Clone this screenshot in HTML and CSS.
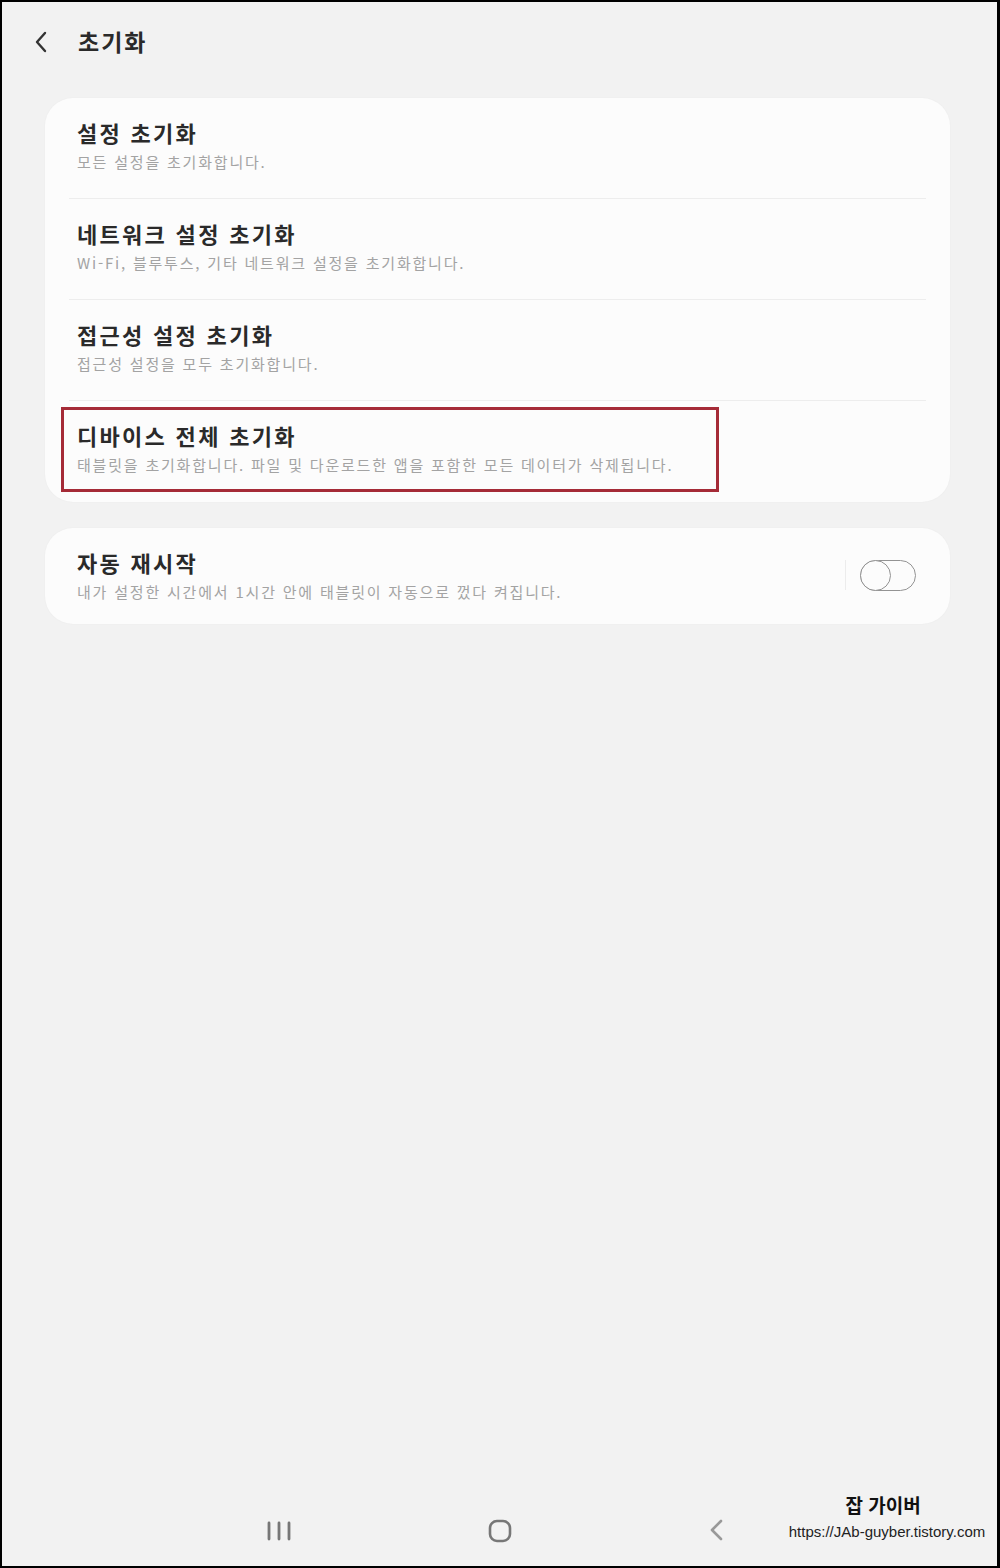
FILE: index.html
```html
<!DOCTYPE html>
<html lang="ko">
<head>
<meta charset="utf-8">
<link rel="stylesheet" href="styles.css">
</head>
<body>
<div class="frame">
  <header class="topbar">
    <svg class="back" width="16" height="24" viewBox="0 0 16 24"><path d="M12 3 L4 12 L12 21" fill="none" stroke="#333" stroke-width="2.4" stroke-linecap="round" stroke-linejoin="round"/></svg>
    <h1 class="title">초기화</h1>
  </header>
  <main class="content">
    <section class="card">
      <div class="row">
        <div class="row-title">설정 초기화</div>
        <div class="row-sub">모든 설정을 초기화합니다.</div>
      </div>
      <div class="row">
        <div class="row-title">네트워크 설정 초기화</div>
        <div class="row-sub">Wi-Fi, 블루투스, 기타 네트워크 설정을 초기화합니다.</div>
      </div>
      <div class="row">
        <div class="row-title">접근성 설정 초기화</div>
        <div class="row-sub">접근성 설정을 모두 초기화합니다.</div>
      </div>
      <div class="row last">
        <div class="highlight"></div>
        <div class="row-title">디바이스 전체 초기화</div>
        <div class="row-sub">태블릿을 초기화합니다. 파일 및 다운로드한 앱을 포함한 모든 데이터가 삭제됩니다.</div>
      </div>
    </section>
    <section class="card card-single">
      <div class="row row-toggle">
        <div class="text">
          <div class="row-title">자동 재시작</div>
          <div class="row-sub">내가 설정한 시간에서 1시간 안에 태블릿이 자동으로 껐다 켜집니다.</div>
        </div>
        <div class="vsep"></div>
        <div class="toggle"><span class="knob"></span></div>
      </div>
    </section>
  </main>
  <footer class="navbar">
    <svg class="nav-recent" width="28" height="20" viewBox="0 0 28 20"><path d="M4 2 V18 M14 2 V18 M24 2 V18" stroke="#777" stroke-width="2.8" stroke-linecap="round"/></svg>
    <svg class="nav-home" width="26" height="26" viewBox="0 0 26 26"><rect x="3" y="3" width="20" height="20" rx="7" fill="none" stroke="#777" stroke-width="2.6"/></svg>
    <svg class="nav-back" width="18" height="24" viewBox="0 0 18 24"><path d="M14 2 L5 11 L14 20" fill="none" stroke="#999" stroke-width="2.6" stroke-linecap="round" stroke-linejoin="round"/></svg>
    <div class="watermark">
      <div class="wm-name">잡 가이버</div>
      <div class="wm-url">https://JAb-guyber.tistory.com</div>
    </div>
  </footer>
</div>
</body>
</html>
```

FILE: styles.css
```css
* { box-sizing: border-box; margin: 0; padding: 0; }
html, body { width: 1000px; height: 1568px; background: #000; }
body {
  font-family: "Noto Sans CJK KR", "Noto Sans", "Liberation Sans", sans-serif;
}
.frame {
  width: 1000px;
  height: 1568px;
  border: 2px solid #000;
  border-right-width: 3px;
  background: #f2f2f2;
  display: flex;
  flex-direction: column;
}
.topbar {
  height: 78px;
  display: flex;
  align-items: center;
  padding-left: 31px;
}
.back { margin-right: 29px; margin-top: 2px; }
.title {
  font-size: 23px;
  font-weight: 700;
  color: #2a2a2a;
  letter-spacing: 2px;
  line-height: 30px;
}
.content {
  flex: 1;
  padding: 18px 0 0 43px;
  display: flex;
  flex-direction: column;
  gap: 26px;
}
.card {
  width: 905px;
  background: #fcfcfc;
  border-radius: 28px;
  padding: 0 24px;
  box-shadow: 0 0 2px rgba(0,0,0,0.04);
}
.row {
  position: relative;
  height: 101px;
  padding: 18px 0 0 8px;
  border-bottom: 1px solid #ededed;
}
.row.last { border-bottom: none; }
.row-title {
  font-size: 22px;
  font-weight: 700;
  color: #2a2a2a;
  line-height: 32px;
  letter-spacing: 2.3px;
}
.row-sub {
  font-size: 15px;
  color: #a3a3a3;
  line-height: 20px;
  margin-top: 4px;
  letter-spacing: 1.8px;
}
.highlight {
  position: absolute;
  left: -8px;
  top: 6px;
  width: 658px;
  height: 85px;
  border: 3px solid #a52b37;
  pointer-events: none;
}
.card-single { height: 96px; }
.row-toggle {
  height: 96px;
  border-bottom: none;
  display: flex;
  align-items: flex-start;
}
.row-toggle .text { flex: 1; }
.vsep {
  width: 1px;
  height: 30px;
  background: #ececec;
  margin-top: 14px;
  margin-right: 14px;
}
.toggle {
  position: relative;
  width: 56px;
  height: 31px;
  border: 1.5px solid #939393;
  border-radius: 16px;
  margin-top: 14px;
  margin-right: 10px;
}
.knob {
  position: absolute;
  left: -1.5px;
  top: -1.5px;
  width: 31px;
  height: 31px;
  border: 1.5px solid #939393;
  border-radius: 50%;
  background: #fcfcfc;
}
.navbar {
  position: relative;
  height: 88px;
}
.nav-recent { position: absolute; left: 263px; top: 43px; }
.nav-home { position: absolute; left: 485px; top: 40px; }
.nav-back { position: absolute; left: 705px; top: 41px; }
.watermark {
  position: absolute;
  left: 775px;
  top: 14px;
  text-align: center;
  width: 220px;
  white-space: nowrap;
}
.wm-name {
  font-size: 19px;
  font-weight: 700;
  color: #111;
  line-height: 26px;
  padding-right: 8px;
}
.wm-url {
  font-family: "Liberation Sans", sans-serif;
  font-size: 15px;
  color: #222;
  line-height: 20px;
  margin-top: 4px;
}
```
